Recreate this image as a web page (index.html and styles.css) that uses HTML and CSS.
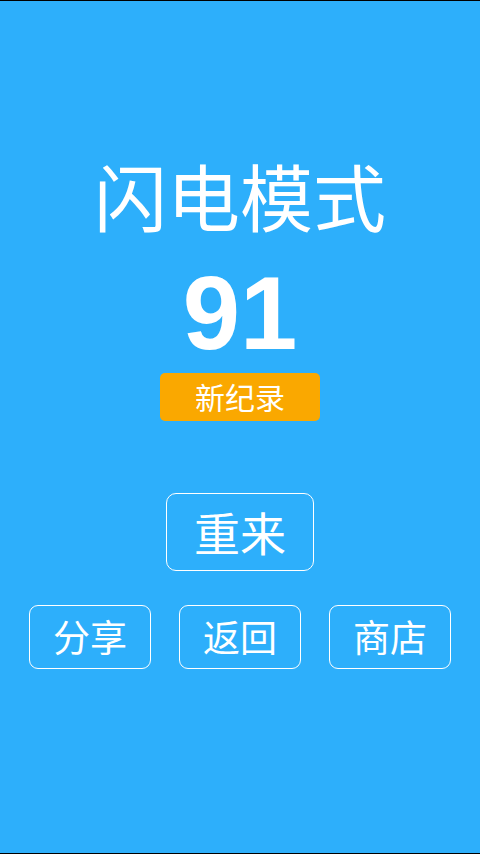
FILE: index.html
```html
<!DOCTYPE html>
<html lang="zh-CN">

<head>
    <meta charset="UTF-8">
    <title>闪电模式</title>
    <link rel="stylesheet" href="styles.css">
</head>

<body>
    <div class="screen">
        <h1 class="mode">闪电模式</h1>
        <div class="score">91</div>
        <div class="record">新纪录</div>
        <div class="retry">重来</div>
        <div class="row">
            <div class="btn">分享</div>
            <div class="btn">返回</div>
            <div class="btn">商店</div>
        </div>
    </div>
</body>

</html>
```

FILE: styles.css
```css
* {
    box-sizing: border-box;
    font-family: "Noto Sans CJK SC", "Noto Sans", sans-serif;
}

body {
    margin: 0;
    background-color: #000;
}

.screen {
    width: 480px;
    height: 854px;
    border-top: 1px solid #000;
    border-bottom: 1px solid #000;
    background-color: rgb(45, 175, 251);
    color: #fff;
    display: flex;
    flex-direction: column;
    align-items: center;
    padding-top: 157px;
}

.mode {
    font-size: 73px;
    font-weight: normal;
    line-height: 73px;
    margin: 0;
}

.score {
    font-family: "Liberation Sans", Arial, sans-serif;
    font-weight: bold;
    font-size: 103px;
    line-height: 103px;
    margin-top: 31px;
}

.record {
    width: 160px;
    height: 48px;
    margin-top: 8px;
    background-color: rgb(250, 168, 0);
    border-radius: 5px;
    font-size: 30px;
    line-height: 47px;
    text-align: center;
}

.retry {
    width: 148px;
    height: 78px;
    margin-top: 72px;
    border: 1.5px solid #fff;
    border-radius: 10px;
    font-size: 46px;
    line-height: 75px;
    text-align: center;
}

.row {
    display: flex;
    gap: 28px;
    margin-top: 34px;
}

.btn {
    width: 122px;
    height: 64px;
    border: 1.5px solid #fff;
    border-radius: 9px;
    font-size: 37px;
    line-height: 61px;
    text-align: center;
}
```
